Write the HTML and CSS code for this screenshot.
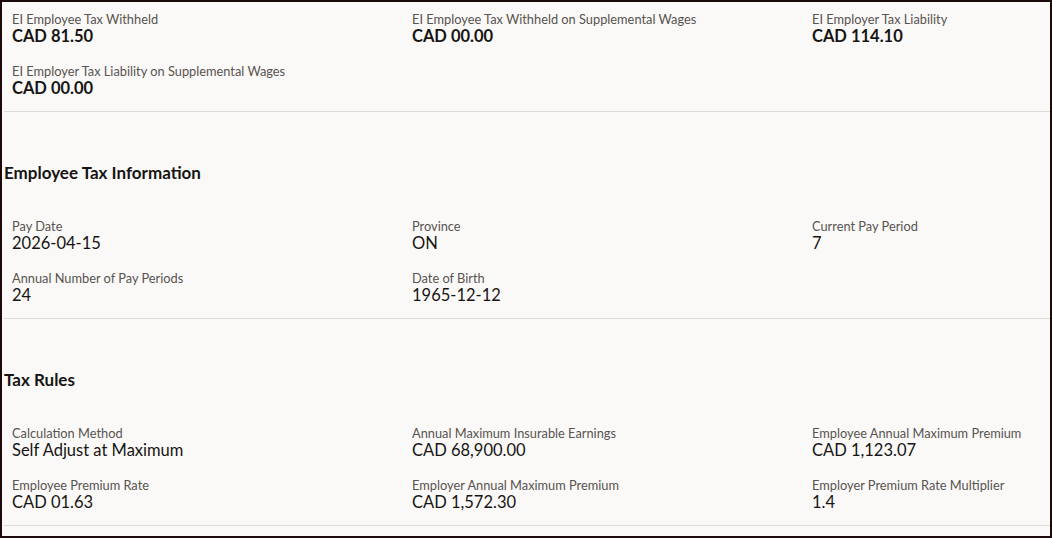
FILE: index.html
```html
<!DOCTYPE html>
<html lang="en">
<head>
  <meta charset="UTF-8">
  <title>Employee Tax Details</title>
  <link rel="stylesheet" href="styles.css">
</head>
<body>

<div class="frame">

  <div class="block">
    <div class="fields">
      <div class="field">
        <div class="label">EI Employee Tax Withheld</div>
        <div class="amount">CAD 81.50</div>
      </div>
      <div class="field">
        <div class="label">EI Employee Tax Withheld on Supplemental Wages</div>
        <div class="amount">CAD 00.00</div>
      </div>
      <div class="field">
        <div class="label">EI Employer Tax Liability</div>
        <div class="amount">CAD 114.10</div>
      </div>
      <div class="field">
        <div class="label">EI Employer Tax Liability on Supplemental Wages</div>
        <div class="amount">CAD 00.00</div>
      </div>
    </div>
  </div>

  <div class="block">
    <h2 class="section-title">Employee Tax Information</h2>
    <div class="fields">
      <div class="field">
        <div class="label">Pay Date</div>
        <div class="value">2026-04-15</div>
      </div>
      <div class="field">
        <div class="label">Province</div>
        <div class="value">ON</div>
      </div>
      <div class="field">
        <div class="label">Current Pay Period</div>
        <div class="value">7</div>
      </div>
      <div class="field">
        <div class="label">Annual Number of Pay Periods</div>
        <div class="value">24</div>
      </div>
      <div class="field">
        <div class="label">Date of Birth</div>
        <div class="value">1965-12-12</div>
      </div>
    </div>
  </div>

  <div class="block">
    <h2 class="section-title">Tax Rules</h2>
    <div class="fields">
      <div class="field">
        <div class="label">Calculation Method</div>
        <div class="value">Self Adjust at Maximum</div>
      </div>
      <div class="field">
        <div class="label">Annual Maximum Insurable Earnings</div>
        <div class="value">CAD 68,900.00</div>
      </div>
      <div class="field">
        <div class="label">Employee Annual Maximum Premium</div>
        <div class="value">CAD 1,123.07</div>
      </div>
      <div class="field">
        <div class="label">Employee Premium Rate</div>
        <div class="value">CAD 01.63</div>
      </div>
      <div class="field">
        <div class="label">Employer Annual Maximum Premium</div>
        <div class="value">CAD 1,572.30</div>
      </div>
      <div class="field">
        <div class="label">Employer Premium Rate Multiplier</div>
        <div class="value">1.4</div>
      </div>
    </div>
  </div>

</div>

</body>
</html>
```

FILE: styles.css
```css
* { box-sizing: border-box; }

html, body {
  margin: 0;
  padding: 0;
  background: #1c0a0a;
}

body {
  font-family: Lato, 'Noto Sans', sans-serif;
  color: #161513;
}

.frame {
  width: 1052px;
  height: 538px;
  border: 2px solid #1c0a0a;
  background: #fbf9f8;
  overflow: hidden;
}

.block {
  margin-left: 2px;
  padding-bottom: 13px;
  border-bottom: 1px solid #dedbd7;
}

.block:first-child {
  padding-top: 8px;
}

.section-title {
  margin: 51px 0 34px;
  font-size: 17px;
  line-height: 20px;
  font-weight: bold;
}

.fields {
  display: grid;
  grid-template-columns: repeat(3, 400px);
  row-gap: 16px;
  padding-left: 8px;
}

.label {
  font-size: 12.8px;
  line-height: 16px;
  padding-top: 1px;
  margin-bottom: -1px;
  color: #57534f;
}

.value {
  font-size: 16.5px;
  line-height: 20px;
}

.amount {
  font-size: 16.5px;
  line-height: 20px;
  font-weight: bold;
}
```
